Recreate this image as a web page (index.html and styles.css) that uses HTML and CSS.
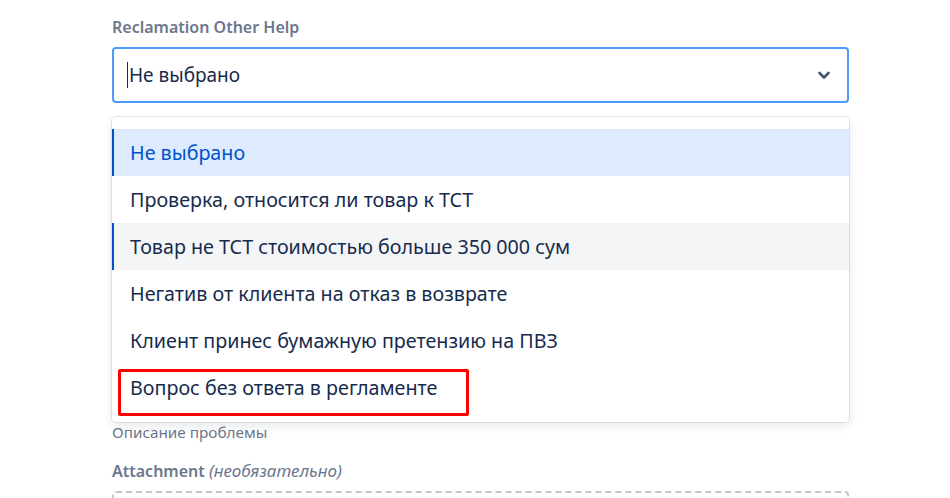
FILE: index.html
```html
<!DOCTYPE html>
<html lang="ru">

<head>
    <meta charset="UTF-8">
    <title>Reclamation Other Help</title>
    <link rel="stylesheet" href="styles.css">
</head>

<body>

    <div class="form">
        <div class="field">
            <label class="field-label">Reclamation Other Help</label>
            <div class="select">
                <span class="caret"></span>
                <span class="select-value">Не выбрано</span>
                <svg class="chevron" width="14" height="10" viewBox="0 0 14 10">
                    <path d="M2.5 3l4.5 4.5 4.5-4.5" fill="none" stroke="#42526E" stroke-width="2.6" stroke-linecap="round" stroke-linejoin="round" />
                </svg>
            </div>

            <div class="menu">
                <div class="option selected">Не выбрано</div>
                <div class="option">Проверка, относится ли товар к ТСТ</div>
                <div class="option hovered">Товар не ТСТ стоимостью больше 350 000 сум</div>
                <div class="option">Негатив от клиента на отказ в возврате</div>
                <div class="option">Клиент принес бумажную претензию на ПВЗ</div>
                <div class="option">Вопрос без ответа в регламенте</div>
                <div class="mark"></div>
            </div>

            <div class="hint">Описание проблемы</div>
        </div>

        <div class="field">
            <label class="field-label">Attachment <em>(необязательно)</em></label>
            <div class="dropzone"></div>
        </div>
    </div>

</body>

</html>
```

FILE: styles.css
```css
html, body {
    height: 498px;
    overflow: hidden;
}

body {
    margin: 0;
    background: #FFFFFF;
    font-family: "Noto Sans", "Open Sans", sans-serif;
    color: #172B4D;
}

.form {
    width: 737px;
    margin-left: 112px;
    padding-top: 17px;
}

.field-label {
    display: block;
    font-size: 16px;
    font-weight: 600;
    color: #6B778C;
    line-height: 20px;
    margin-bottom: 10px;
}

.field-label em {
    font-weight: 400;
    font-size: 17px;
}

.select {
    height: 56px;
    box-sizing: border-box;
    border: 2px solid #4C9AFF;
    border-radius: 4px;
    display: flex;
    align-items: center;
    padding: 0 16px 0 13px;
    font-size: 19px;
}

.caret {
    width: 1px;
    height: 26px;
    background: #172B4D;
    margin-right: 1px;
}

.select-value {
    flex: 1;
}

.chevron {
    display: block;
}

.menu {
    position: relative;
    margin-top: 14px;
    border-radius: 4px;
    background: #FFFFFF;
    box-shadow: 0 0 0 1px rgba(9, 30, 66, 0.1), 0 4px 11px rgba(9, 30, 66, 0.1);
    padding: 12px 0 11px;
}

.option {
    height: 47px;
    display: flex;
    align-items: center;
    padding-left: 16px;
    font-size: 19.7px;
    border-left: 2px solid transparent;
}

.option.selected {
    background: #DEEBFF;
    border-left-color: #0052CC;
    color: #0052CC;
}

.option.hovered {
    background: #F4F5F7;
    border-left-color: #0052CC;
}

.mark {
    position: absolute;
    left: 6px;
    top: 252px;
    width: 345px;
    height: 41px;
    border: 3px solid #FF0000;
    border-radius: 2px;
}

.hint {
    font-size: 15.3px;
    color: #6B778C;
    margin-top: 1px;
    line-height: 18px;
}

.field + .field {
    margin-top: 20px;
}

.dropzone {
    height: 60px;
    border: 2px dashed #C1C7D0;
    border-radius: 4px;
}
```
